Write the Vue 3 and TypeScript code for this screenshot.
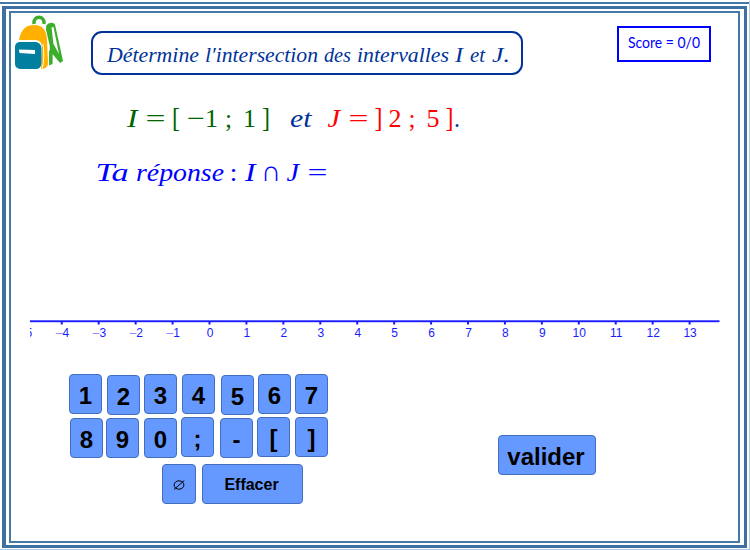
<script setup lang="ts">
interface Token { t: string; x: number; w: number; c?: string; up?: boolean; k?: string }
interface Key { label: string; gap: number; drop: number }

const title: Token[] = [
  { t: 'Détermine', x: 16, w: 92 },
  { t: 'l′intersection', x: 114, w: 113 },
  { t: 'des', x: 233, w: 27 },
  { t: 'intervalles', x: 266, w: 92 },
  { t: 'I', x: 364, w: 8 },
  { t: 'et', x: 379, w: 15 },
  { t: 'J.', x: 401, w: 18 },
]

const intervals: Token[] = [
  { t: 'I', x: 127, w: 10.5, c: 'green' },
  { t: '=', x: 145.5, w: 20, c: 'green', up: true },
  { t: '[', x: 172, w: 8, c: 'green', up: true, k: 'bracket' },
  { t: '−', x: 187, w: 18, c: 'green', up: true },
  { t: '1', x: 205, w: 13, c: 'green', up: true },
  { t: ';', x: 225, w: 7, c: 'green', up: true },
  { t: '1', x: 243, w: 13, c: 'green', up: true },
  { t: ']', x: 262, w: 8, c: 'green', up: true, k: 'bracket' },
  { t: 'et', x: 290, w: 21.5, c: 'navy' },
  { t: 'J', x: 327.5, w: 12.5, c: 'red' },
  { t: '=', x: 348.5, w: 20, c: 'red', up: true },
  { t: ']', x: 374.5, w: 8, c: 'red', up: true, k: 'bracket' },
  { t: '2', x: 388.5, w: 13, c: 'red', up: true },
  { t: ';', x: 408.5, w: 7, c: 'red', up: true },
  { t: '5', x: 426.5, w: 13, c: 'red', up: true },
  { t: ']', x: 445.5, w: 8, c: 'red', up: true, k: 'bracket' },
  { t: '.', x: 454, w: 6, c: 'navy', up: true },
]

const answer: Token[] = [
  { t: 'Ta', x: 95.5, w: 33 },
  { t: 'réponse', x: 136, w: 88 },
  { t: ':', x: 229.5, w: 8, up: true },
  { t: 'I', x: 245, w: 10.5 },
  { t: '∩', x: 261, w: 20, up: true, k: 'cap' },
  { t: 'J', x: 286.5, w: 12.5 },
  { t: '=', x: 307.5, w: 20, up: true },
]

const ticks = Array.from({ length: 19 }, (_, i) => i - 5)
const tickX = (n: number) => 179.6 + n * 36.93

const rows: Key[][] = [
  [
    { label: '1', gap: 0, drop: 0 }, { label: '2', gap: 5, drop: 1 }, { label: '3', gap: 4, drop: 0 },
    { label: '4', gap: 5, drop: 0 }, { label: '5', gap: 6, drop: 1 }, { label: '6', gap: 4, drop: 0 },
    { label: '7', gap: 4, drop: 0 },
  ],
  [
    { label: '8', gap: 1, drop: 1 }, { label: '9', gap: 3, drop: 1 }, { label: '0', gap: 5, drop: 1 },
    { label: ';', gap: 4, drop: 0 }, { label: '-', gap: 6, drop: 1 }, { label: '[', gap: 4, drop: 0 },
    { label: ']', gap: 5, drop: 0 },
  ],
]
</script>

<template>
  <div class="edge">
    <div class="band">
      <div class="sheet">
        <header class="top">
          <svg class="bag" width="50" height="56" viewBox="14 15 50 56">
            <path d="M34 24C33 15 45 15 44 24" fill="none" stroke="#3dae2b" stroke-width="3.400" />
            <path d="M46 26C48 22.500 53 21.500 55 24.500L63 61L60 63L52.500 54V64L49 65.500V45Z" fill="#3dae2b" />
            <path d="M51.500 27.500L53.500 27L59 54L53.500 44Z" fill="#fff" />
            <path d="M46 29L51.500 47V54L48.500 49Z" fill="#fff" />
            <path d="M47 28L51 46V63" fill="none" stroke="#3dae2b" stroke-width="2.500" />
            <path d="M19 40C21 29 26 25 34 25C43 25 46 30 47 39L48 63C48 67 45 69 41 69L42 47Q42 41 36 40Z" fill="#ffb000" />
            <path d="M43 44Q45 58 42 69" fill="none" stroke="#fff" stroke-width="1" />
            <path d="M19 42H36Q41 43 41.500 48V63Q41 69 36 69H20Q15 68 15 64V47Q15 43 19 42Z" fill="#007f9f" />
            <path d="M19 49.500L35 50V54L19.500 53Z" fill="#fff" />
          </svg>
          <div class="title">
            <svg class="math small" width="428" height="40">
              <text v-for="(k, i) in title" :key="i" :x="k.x - 2" y="28.500" :textLength="k.w" lengthAdjust="spacingAndGlyphs">{{ k.t }}</text>
            </svg>
          </div>
          <div class="score">
            <svg width="90" height="32">
              <text x="9" y="20" textLength="72" lengthAdjust="spacingAndGlyphs">Score = 0/0</text>
            </svg>
          </div>
        </header>

        <svg class="math formulas" width="727" height="100">
          <g transform="translate(-11 -95)">
            <text v-for="(k, i) in intervals" :key="i" :class="[k.c, k.k, { up: k.up }]" :x="k.x" y="126.500" :textLength="k.w" lengthAdjust="spacingAndGlyphs">{{ k.t }}</text>
            <text v-for="(k, i) in answer" :key="'a' + i" :class="['blue', k.k, { up: k.up }]" :x="k.x" y="180.500" :textLength="k.w" lengthAdjust="spacingAndGlyphs">{{ k.t }}</text>
          </g>
        </svg>

        <svg class="axis" width="690" height="30" viewBox="0 0 690 30">
          <rect x="0" y="5.300" width="689.500" height="1.900" />
          <template v-for="n in ticks" :key="n">
            <rect :x="tickX(n) - 1.100" y="7" width="2" height="2.500" />
            <text :x="tickX(n) + (n < 0 ? 0.600 : 0.400)" y="22" text-anchor="middle"><tspan v-if="n < 0" class="minus">–</tspan>{{ Math.abs(n) }}</text>
          </template>
        </svg>

        <section class="controls">
          <div class="pad">
            <div v-for="(row, r) in rows" :key="r" class="row">
              <button v-for="k in row" :key="k.label" class="key" :style="{ marginLeft: k.gap + 'px', marginTop: k.drop + 'px' }">{{ k.label }}</button>
            </div>
            <div class="row last">
              <button class="key">
                <svg width="12" height="12" viewBox="0 0 12 12"><ellipse cx="6" cy="6" rx="4.900" ry="4.200" /><path d="M1 10.500L11.300 1.500" /></svg>
              </button>
              <button class="key erase">Effacer</button>
            </div>
          </div>
          <button class="key submit">valider</button>
        </section>
      </div>
    </div>
  </div>
</template>

<style>
body { background: #fff; overflow: hidden; }
</style>

<style scoped>
* { box-sizing: border-box; }
svg { display: block; }
.edge {
  width: 750px; height: 550px;
  padding: 4px 2px 1px;
  border-top: 2px solid transparent;
  border-right: 1px solid #b5c8dc;
  border-bottom: 1px solid #b5c8dc;
  background: linear-gradient(#4478a6, #4478a6) 0 0 / 100% 2px no-repeat;
}
.band { height: 542px; padding: 2px 4px 2px 3px; border: 3px solid #3d70a0; border-left-width: 4px; }
.sheet { height: 532px; border: 2px solid #4478a6; display: flex; flex-direction: column; }
.top { display: flex; align-items: flex-start; height: 82px; padding: 2px 0 0 3px; }
.title { margin: 16px 0 0 27px; width: 432px; height: 44px; border: 2px solid #003399; border-radius: 11px; }
.score { margin: 11px 0 0 94px; width: 94px; height: 36px; border: 2px solid #0000ff; }
.score svg { font: 14.500px Lato, "Liberation Sans", sans-serif; fill: #0000ff; }
.math { font-family: "Liberation Serif", serif; font-style: italic; }
.small { font-size: 20px; fill: #003399; }
.formulas { font-size: 26px; }
.up { font-style: normal; }
.bracket { font-size: 28px; }
.cap { font-size: 29px; }
.green { fill: #006400; }
.navy { fill: #003399; }
.red { fill: #ff0000; }
.blue { fill: #0000ff; }
.axis { margin: 120px 0 0 19px; fill: #1a1aff; font: 12px "Liberation Sans", sans-serif; }
.minus { fill: #8585ff; }
.controls { display: flex; align-items: flex-start; padding: 29px 0 0 58px; }
.pad { width: 260px; }
.row { display: flex; align-items: flex-start; height: 43px; }
.key {
  display: flex; align-items: center; justify-content: center;
  width: 33px; height: 40px; padding: 3px 0 0; margin: 0; flex: none;
  border: 1px solid #416fbd; border-radius: 4px; background: #6699ff; color: #000;
  font: bold 24px "Liberation Sans", sans-serif;
}
.last { margin: 4px 0 0 93px; gap: 6px; }
.last .key { padding-top: 1px; width: 34px; }
.last .key svg { fill: none; stroke: #000; stroke-width: 1; }
.last .erase { width: 101px; padding-right: 2px; font-size: 16px; }
.submit { width: 98px; padding-right: 2px; margin: 61px 0 0 169px; }
</style>
